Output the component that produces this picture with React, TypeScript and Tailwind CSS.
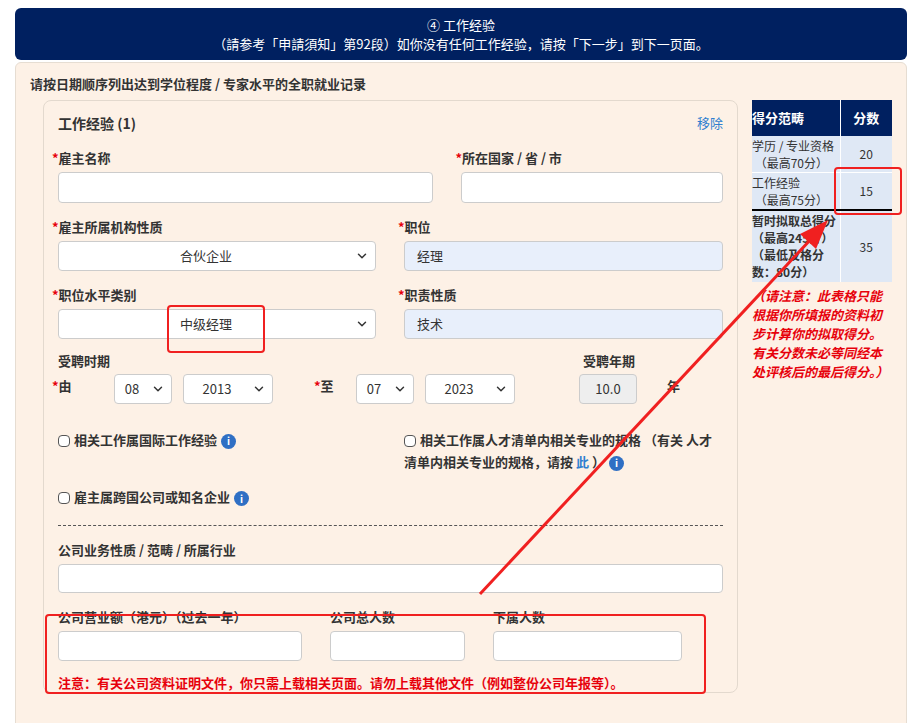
import { ChevronDown } from 'lucide-react'

const font = { fontFamily: '"Noto Sans CJK SC", "Noto Sans", sans-serif' }

const Label = ({ text, req = false }: { text: string; req?: boolean }) => (
  <div className="mb-1 flex h-[20px] items-center text-[13px] font-semibold text-[#333]">
    {req && <span className="-ml-[6px] text-red-600">*</span>}
    {text}
  </div>
)

const Select = ({ value, w }: { value: string; w: string }) => (
  <div className={`relative flex ${w} h-[30px] items-center rounded border border-[#ccc] bg-white pr-[22px] text-[13px] font-normal text-[#333]`}>
    <span className="flex-1 text-center">{value}</span>
    <ChevronDown className="absolute right-[6px] h-[14px] w-[14px] text-[#333]" strokeWidth={2.5} />
  </div>
)

const Info = () => (
  <span className="ml-1 inline-flex h-[15px] w-[15px] items-center justify-center rounded-full bg-[#2f6fc4] align-middle text-[10px] font-bold text-white">
    i
  </span>
)

const Check = () => <span className="mr-1 inline-block h-[12px] w-[12px] rounded-sm border border-[#555] bg-white align-middle" />

export default function App() {
  return (
    <div className="relative h-[723px] w-[922px] overflow-hidden bg-white pt-2" style={font}>
      <div className="mx-[15px] flex h-[52px] flex-col items-center justify-center rounded-md bg-[#002060] text-[13px] leading-[19px] text-white">
        <div>④ 工作经验</div>
        <div>（請参考「申請須知」第92段）如你没有任何工作经验，请按「下一步」到下一页面。</div>
      </div>
      <div className="mx-[15px] mt-[2px] h-[700px] rounded-md border border-[#e6ddd2] bg-[#fdf1e6] px-[14px] pt-[11px]">
        <div className="text-[13px] font-semibold text-[#333]">请按日期顺序列出达到学位程度 / 专家水平的全职就业记录</div>
        <div className="mt-[6px] flex gap-[14px] pl-[13px]">
          <div className="w-[695px] rounded-lg border border-[#e3d9ce] px-[14px] pt-[12px]">
            <div className="flex justify-between">
              <span className="text-[14px] font-semibold text-[#333]">工作经验 (1)</span>
              <span className="text-[13px] text-[#2f7fd0]">移除</span>
            </div>
            <div className="mt-[14px] flex gap-[28px]">
              <div className="w-[376px]"><Label text="雇主名称" req /><div className="h-[31px] rounded border border-[#ccc] bg-white" /></div>
              <div className="w-[262px]"><Label text="所在国家 / 省 / 市" req /><div className="h-[31px] rounded border border-[#ccc] bg-white" /></div>
            </div>
            <div className="mt-[14px] flex gap-[28px]">
              <div className="w-[318px]"><Label text="雇主所属机构性质" req /><Select value="合伙企业" w="w-[318px]" /></div>
              <div className="w-[320px]"><Label text="职位" req /><div className="flex h-[30px] items-center rounded border border-[#ccc] bg-[#e8effb] px-3 text-[13px] text-[#333]">经理</div></div>
            </div>
            <div className="mt-[14px] flex gap-[28px]">
              <div className="w-[318px]"><Label text="职位水平类别" req /><Select value="中级经理" w="w-[318px]" /></div>
              <div className="w-[320px]"><Label text="职责性质" req /><div className="flex h-[30px] items-center rounded border border-[#ccc] bg-[#e8effb] px-3 text-[13px] text-[#333]">技术</div></div>
            </div>
            <div className="mt-[12px] flex justify-between pr-[88px] text-[13px] font-semibold text-[#333]">
              <span>受聘时期</span><span>受聘年期</span>
            </div>
            <div className="mt-[4px] flex items-start text-[13px] font-semibold text-[#333]">
              <span className="-ml-[6px] mt-[2px] w-[62px]"><span className="text-red-600">*</span>由</span>
              <Select value="08" w="w-[58px]" />
              <div className="w-[11px]" />
              <Select value="2013" w="w-[90px]" />
              <span className="ml-[41px] mt-[2px] w-[42px]"><span className="text-red-600">*</span>至</span>
              <Select value="07" w="w-[58px]" />
              <div className="w-[11px]" />
              <Select value="2023" w="w-[90px]" />
              <div className="ml-[64px] flex h-[30px] w-[58px] items-center justify-center rounded border border-[#ccc] bg-[#eee] text-[13px] font-normal">10.0</div>
              <span className="ml-[30px] mt-[2px]">年</span>
            </div>
            <div className="mt-[25px] flex text-[13px] font-semibold leading-[22px] text-[#333]">
              <div className="w-[346px]"><Check />相关工作属国际工作经验<Info /></div>
              <div className="w-[310px]"><Check />相关工作属人才清单内相关专业的规格 （有关 人才清单内相关专业的规格，请按 <span className="text-[#2f7fd0]">此</span> ）<Info /></div>
            </div>
            <div className="mt-[14px] text-[13px] font-semibold text-[#333]"><Check />雇主属跨国公司或知名企业<Info /></div>
            <div className="mt-[18px] border-t border-dashed border-[#555]" />
            <div className="mt-[14px]"><Label text="公司业务性质 / 范畴 / 所属行业" /></div>
            <div className="mt-[2px] h-[29px] rounded border border-[#ccc] bg-white" />
            <div className="mt-[14px] flex gap-[28px]">
              <div className="w-[244px]"><Label text="公司营业额（港元）（过去一年）" /><div className="mt-[2px] h-[30px] rounded border border-[#ccc] bg-white" /></div>
              <div className="w-[135px]"><Label text="公司总人数" /><div className="mt-[2px] h-[30px] rounded border border-[#ccc] bg-white" /></div>
              <div className="w-[189px]"><Label text="下属人数" /><div className="mt-[2px] h-[30px] rounded border border-[#ccc] bg-white" /></div>
            </div>
            <div className="mt-[12px] text-[13px] font-semibold text-red-600">注意：有关公司资料证明文件，你只需上载相关页面。请勿上载其他文件（例如整份公司年报等）。</div>
          </div>
          <div className="w-[141px] text-[12px] text-[#333]">
            <table className="w-full border-collapse">
              <tbody>
                <tr className="h-[36px] bg-[#002060] text-[13px] font-bold text-white">
                  <td className="w-[88px] border-r border-white">得分范畴</td>
                  <td className="text-center">分数</td>
                </tr>
                <tr className="h-[37px] border-b border-white bg-[#dfe8f5] leading-[17px]">
                  <td className="whitespace-nowrap border-r border-white">学历 / 专业资格<br />&nbsp;（最高70分）</td>
                  <td className="text-center">20</td>
                </tr>
                <tr className="h-[37px] border-b-2 border-black bg-[#dfe8f5] leading-[17px]">
                  <td className="border-r border-white">工作经验<br />&nbsp;（最高75分）</td>
                  <td className="text-center">15</td>
                </tr>
                <tr className="h-[72px] bg-[#dfe8f5] font-bold leading-[17px]">
                  <td className="border-r border-white">暂时拟取总得分<br />（最高245分）<br />（最低及格分数：80分）</td>
                  <td className="text-center font-normal">35</td>
                </tr>
              </tbody>
            </table>
            <div className="mt-[4px] text-[13px] font-bold italic leading-[19px] text-red-600">
              （请注意：此表格只能根据你所填报的资料初步计算你的拟取得分。 有关分数未必等同经本处评核后的最后得分。）
            </div>
          </div>
        </div>
      </div>
      <div className="absolute left-[167px] top-[305px] h-[48px] w-[98px] rounded-sm border-2 border-[#f02020]" />
      <div className="absolute left-[834px] top-[167px] h-[48px] w-[68px] rounded-sm border-2 border-[#f02020]" />
      <div className="absolute left-[45px] top-[614px] h-[80px] w-[661px] rounded-sm border-2 border-[#f02020]" />
      <svg className="pointer-events-none absolute left-0 top-0" width="922" height="723">
        <line x1="480" y1="594" x2="812" y2="238" stroke="#f02020" strokeWidth="3" />
        <polygon points="828,220 800,234 816,249" fill="#f02020" />
      </svg>
    </div>
  )
}
